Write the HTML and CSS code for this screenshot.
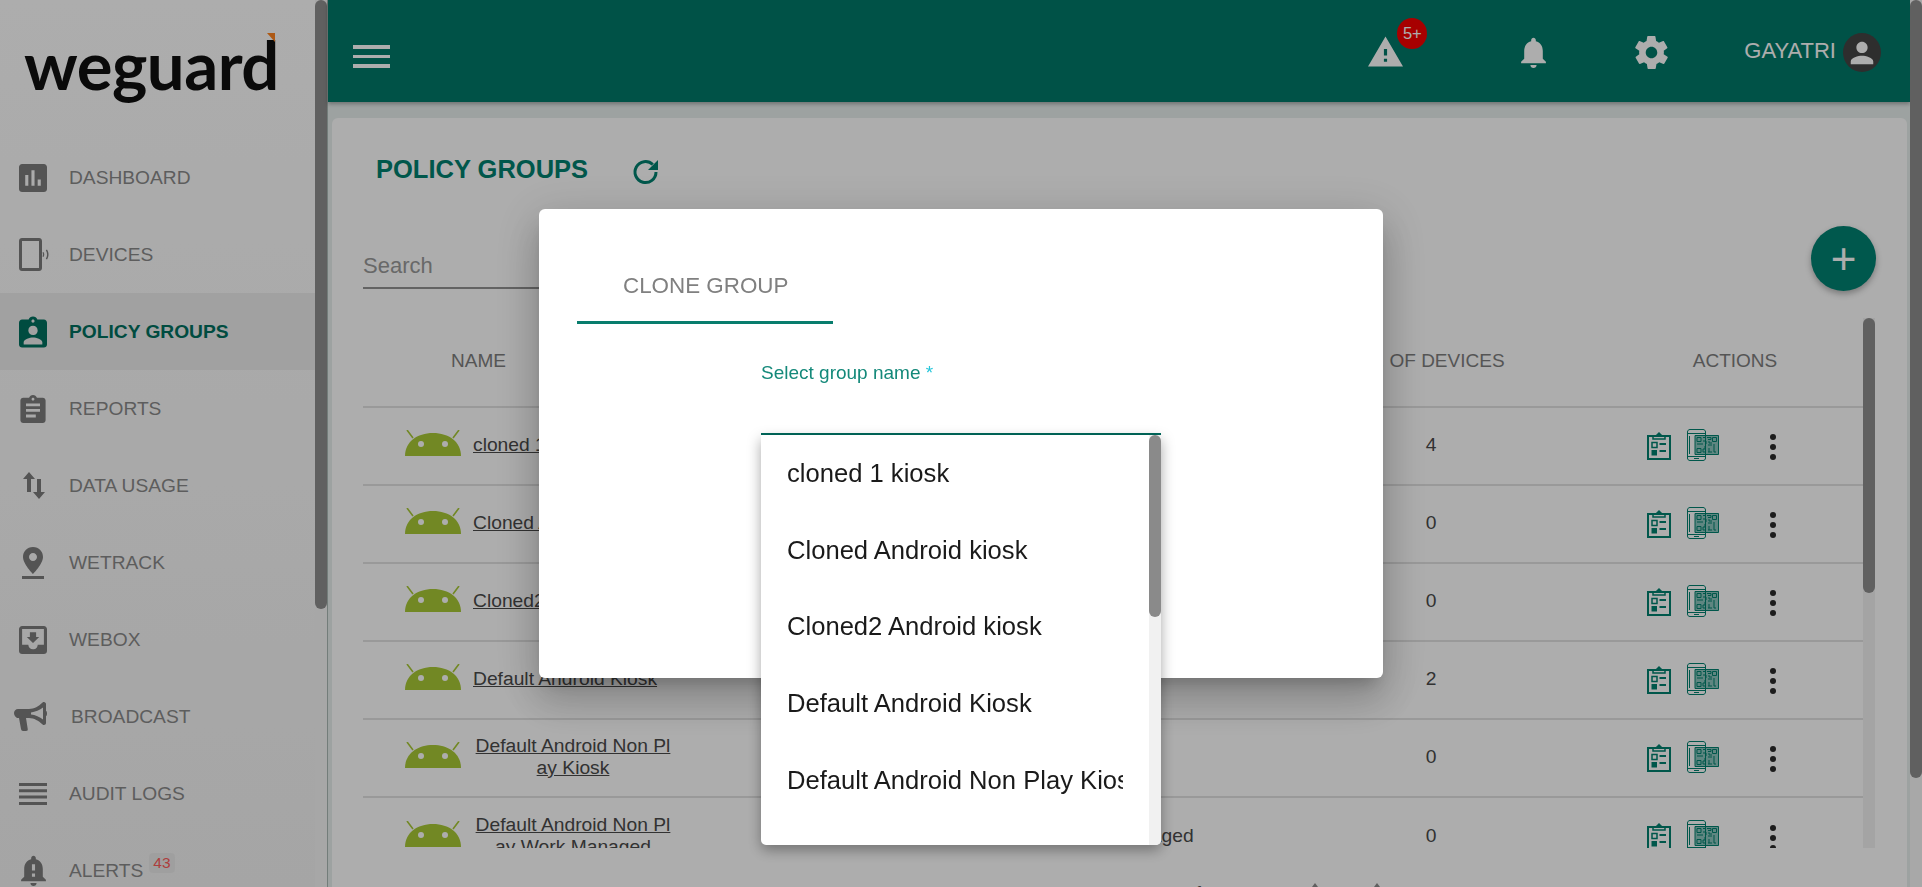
FILE: index.html
```html
<!DOCTYPE html>
<html lang="en">
<head>
    <meta charset="UTF-8">
    <meta name="viewport" content="width=device-width, initial-scale=1.0">
    <title>Policy Groups - WeGuard</title>
    <link rel="stylesheet" href="styles.css">
</head>
<body>
    <svg class="icon-defs" width="0" height="0" aria-hidden="true">
        <defs>
            <symbol id="android" viewBox="0 0 56 26">
                <path d="M0 26C0 12 12 3 28 3s28 9 28 23z" fill="currentColor"/>
                <path d="M8 8 2 0M48 8l6-8" stroke="currentColor" stroke-width="1.6" fill="none"/>
                <circle cx="16" cy="14" r="3" fill="#fff"/>
                <circle cx="40" cy="14" r="3" fill="#fff"/>
            </symbol>
            <symbol id="clipboard" viewBox="0 0 24 29">
                <path d="M1 5h22v23H1z" fill="none" stroke="currentColor" stroke-width="2"/>
                <path d="M6 8V5h3l3-3 3 3h3v3z" fill="none" stroke="currentColor" stroke-width="1.5"/>
                <path d="M5 11.500h5v5H5z" fill="none" stroke="currentColor" stroke-width="1.500"/>
                <path d="M4.500 19h5.500v5.500H4.500z" fill="currentColor"/>
                <path d="M12.500 13h6.500M12.500 20h6.500" stroke="currentColor" stroke-width="1.800"/>
            </symbol>
            <symbol id="qr-phone" viewBox="0 0 32 32">
                <path d="M3 .5h13c1.500 0 2.500 1 2.500 2.500v26c0 1.500-1 2.500-2.500 2.500H3C1.500 31.500.5 30.500.5 29V3C.5 1.500 1.500.5 3 .5z" fill="none" stroke="currentColor"/>
                <path d="M.5 4.500h18M.5 27.500h18M7 29.500h5M2.500 7v18" stroke="currentColor" fill="none"/>
                <path d="M8 6.500h23.500v19H8z" fill="currentColor" fill-opacity=".45" stroke="currentColor"/>
                <path d="M10 8.500h4v4h-4zM25.500 8.500h4v4h-4zM10 19.500h4v4h-4zM16 8.500h2M20 8.500h4v2h-3M16 12h3v3M10 15h6M22 12v2h3M18 17v3h-2v3h3M21 16h4M22 19v4h3M27 15v8h2M21 23h1" fill="none" stroke="currentColor"/>
            </symbol>
            <symbol id="kebab" viewBox="0 0 6 26">
                <circle cx="3" cy="3" r="3" fill="currentColor"/>
                <circle cx="3" cy="13" r="3" fill="currentColor"/>
                <circle cx="3" cy="23" r="3" fill="currentColor"/>
            </symbol>
        </defs>
    </svg>

    <div class="app">
        <aside class="sidebar">
            <div class="sidebar-content">
                <div class="logo">
                    <span class="logo-text">weguard</span>
                    <span class="logo-mark"></span>
                </div>
                <nav class="nav">
                    <a class="nav-item">
                        <svg class="nav-icon" viewBox="3 3 18 18"><path d="M19 3H5c-1.100 0-2 .9-2 2v14c0 1.100.9 2 2 2h14c1.100 0 2-.9 2-2V5c0-1.100-.9-2-2-2zM9 17H7v-7h2v7zm4 0h-2V7h2v10zm4 0h-2v-4h2v4z"/></svg>
                        <span>DASHBOARD</span>
                    </a>
                    <a class="nav-item">
                        <svg class="nav-icon nav-icon-device" viewBox="0 0 32 35"><path d="M4 1h17c1.700 0 3 1.300 3 3v27c0 1.700-1.300 3-3 3H4c-1.700 0-3-1.300-3-3V4c0-1.700 1.300-3 3-3zm0 3v27h17V4z"/><path d="M25.500 15c1 1.500 1 3.500 0 5l-1-.6c.6-1.200.6-2.600 0-3.800zM29 12.500c2 3 2 7 0 10l-1.200-.7c1.700-2.600 1.700-6 0-8.600z"/></svg>
                        <span>DEVICES</span>
                    </a>
                    <a class="nav-item nav-item-active">
                        <svg class="nav-icon" viewBox="3 1 18 20"><path d="M19 3h-4.200C14.400 1.800 13.300 1 12 1s-2.400.8-2.800 2H5c-1.100 0-2 .9-2 2v14c0 1.100.9 2 2 2h14c1.100 0 2-.9 2-2V5c0-1.100-.9-2-2-2zm-7 0c.6 0 1 .4 1 1s-.4 1-1 1-1-.4-1-1 .4-1 1-1zm0 4c1.700 0 3 1.300 3 3s-1.300 3-3 3-3-1.300-3-3 1.300-3 3-3zm6 12H6v-1.400c0-2 4-3.100 6-3.100s6 1.100 6 3.100V19z"/></svg>
                        <span>POLICY GROUPS</span>
                    </a>
                    <a class="nav-item">
                        <svg class="nav-icon" viewBox="3 1 18 20"><path d="M19 3h-4.200C14.400 1.800 13.300 1 12 1s-2.400.8-2.800 2H5c-1.100 0-2 .9-2 2v14c0 1.100.9 2 2 2h14c1.100 0 2-.9 2-2V5c0-1.100-.9-2-2-2zm-7 0c.6 0 1 .4 1 1s-.4 1-1 1-1-.4-1-1 .4-1 1-1zm2 14H7v-2h7v2zm3-4H7v-2h10v2zm0-4H7V7h10v2z"/></svg>
                        <span>REPORTS</span>
                    </a>
                    <a class="nav-item">
                        <svg class="nav-icon nav-icon-arrows" viewBox="0 0 22 27"><path d="M6 0l6 7H8v13H4V7H0zM16 27l-6-7h4V7h4v13h4z"/></svg>
                        <span>DATA USAGE</span>
                    </a>
                    <a class="nav-item">
                        <svg class="nav-icon nav-icon-pin" viewBox="0 0 22 32"><path d="M11 0C5 0 1 4.500 1 10c0 7 10 17 10 17s10-10 10-17c0-5.500-4-10-10-10zm0 14c-2.200 0-4-1.800-4-4s1.800-4 4-4 4 1.800 4 4-1.800 4-4 4z"/><path d="M0 29h22v3H0z"/></svg>
                        <span>WETRACK</span>
                    </a>
                    <a class="nav-item">
                        <svg class="nav-icon" viewBox="3 3 18 18"><path d="M19 3H5c-1.100 0-2 .9-2 2v14c0 1.100.9 2 2 2h14c1.100 0 2-.9 2-2V5c0-1.100-.9-2-2-2zm0 12h-4c0 1.700-1.300 3-3 3s-3-1.300-3-3H5V5h14v10zm-3-5h-2V7h-4v3H8l4 4z"/></svg>
                        <span>WEBOX</span>
                    </a>
                    <a class="nav-item">
                        <svg class="nav-icon nav-icon-horn" viewBox="0 0 33 29"><path d="M30 0c-1 0-1.500.5-2 1-3 3-8 6-13 6H4C1.800 7 0 8.800 0 11s1.800 5 4 5h1l2 11c.2 1 1 2 2 2h3c1.500 0 2-1 1.700-2.300L12 16h3c5 0 10 3 13 6 .5.500 1 1 2 1s2-1 2-2V14c.7 0 1-.8 1-2.500S32.700 9 32 9V2c0-1-1-2-2-2zm-1 5.500v12C26 15 21 13 17 12.600V10.400C21 10 26 8 29 5.500z"/></svg>
                        <span>BROADCAST</span>
                    </a>
                    <a class="nav-item">
                        <svg class="nav-icon nav-icon-lines" viewBox="0 0 28 22"><path d="M0 0h28v3H0zM0 6.300h28v3H0zM0 12.600h28v3H0zM0 19h28v3H0z"/></svg>
                        <span>AUDIT LOGS</span>
                    </a>
                    <a class="nav-item">
                        <svg class="nav-icon nav-icon-bell" viewBox="4 2 16 20"><path d="M12 22c1.100 0 2-.9 2-2h-4c0 1.100.9 2 2 2zm6-6v-5c0-3.100-1.600-5.600-4.500-6.300V4c0-.8-.7-1.500-1.500-1.500s-1.500.7-1.500 1.500v.7C7.600 5.400 6 7.900 6 11v5l-2 2v1h16v-1l-2-2zm-5 0h-2v-2h2v2zm0-4h-2V8h2v4z"/></svg>
                        <span>ALERTS</span>
                        <span class="nav-count">43</span>
                    </a>
                </nav>
            </div>
            <div class="scroll-track"><div class="scroll-thumb sidebar-thumb"></div></div>
        </aside>

        <div class="main">
            <header class="topbar">
                <button class="menu-button" aria-label="Menu"><span></span><span></span><span></span></button>
                <div class="topbar-actions">
                    <div class="topbar-alert">
                        <svg class="top-icon-warn" viewBox="1 2 22 19"><path d="M1 21h22L12 2 1 21zm12-3h-2v-2h2v2zm0-4h-2v-4h2v4z"/></svg>
                        <span class="alert-badge">5+</span>
                    </div>
                    <svg class="top-icon-bell" viewBox="4 2 16 20"><path d="M12 22c1.100 0 2-.9 2-2h-4c0 1.100.9 2 2 2zm6-6v-5c0-3.100-1.600-5.600-4.500-6.300V4c0-.8-.7-1.500-1.500-1.500s-1.500.7-1.500 1.500v.7C7.600 5.400 6 7.900 6 11v5l-2 2v1h16v-1l-2-2z"/></svg>
                    <svg class="top-icon-gear" viewBox="2.500 2 19 20"><path d="M19.400 13c0-.3.100-.6.100-1s0-.7-.1-1l2.100-1.600c.2-.2.200-.4.100-.6l-2-3.500c-.1-.2-.4-.3-.6-.2l-2.500 1c-.5-.4-1.100-.7-1.700-1l-.4-2.600c0-.3-.2-.5-.5-.5h-4c-.3 0-.5.200-.5.500l-.4 2.600c-.6.300-1.200.6-1.700 1l-2.500-1c-.2-.1-.5 0-.6.200l-2 3.500c-.1.200-.1.500.1.600L4.600 11c0 .3-.1.700-.1 1s0 .7.100 1l-2.100 1.600c-.2.200-.2.400-.1.600l2 3.500c.1.200.4.300.6.200l2.500-1c.5.400 1.100.7 1.700 1l.4 2.600c0 .3.200.5.500.5h4c.3 0 .5-.2.500-.5l.4-2.600c.6-.3 1.200-.6 1.700-1l2.500 1c.2.100.5 0 .6-.2l2-3.500c.1-.2.100-.5-.1-.6L19.400 13zM12 15.500c-1.900 0-3.500-1.600-3.500-3.500s1.600-3.500 3.500-3.500 3.500 1.600 3.500 3.500-1.600 3.500-3.500 3.500z"/></svg>
                    <div class="user">
                        <span class="user-name">GAYATRI</span>
                        <span class="user-avatar">
                            <svg viewBox="0 0 24 24"><path d="M12 12c2.500 0 4.500-2 4.500-4.500S14.500 3 12 3 7.500 5 7.500 7.500 9.500 12 12 12zm0 2.200c-3 0-9 1.500-9 4.500V21h18v-2.300c0-3-6-4.500-9-4.500z"/></svg>
                        </span>
                    </div>
                </div>
            </header>

            <section class="card">
                <div class="title-row">
                    <h1>POLICY GROUPS</h1>
                    <svg class="refresh" viewBox="0 0 28 28"><path d="M24 14a10.500 10.500 0 1 1-3.200-7.500" fill="none" stroke="currentColor" stroke-width="3"/><path d="M26 2v10H16z" fill="currentColor"/></svg>
                </div>
                <div class="search-row">
                    <div class="search">Search</div>
                    <button class="fab" aria-label="Add">+</button>
                </div>

                <div class="table">
                    <div class="table-main">
                        <div class="table-row table-head">
                            <div class="col-name">NAME</div>
                            <div class="col-mode">MODE</div>
                            <div class="col-count">NO. OF DEVICES</div>
                            <div class="col-actions">ACTIONS</div>
                        </div>
                        <div class="table-body">
                            <div class="table-row">
                                <div class="col-name"><svg class="android"><use href="#android"/></svg><a class="group-link">cloned 1 kiosk</a></div>
                                <div class="col-mode">Kiosk</div>
                                <div class="col-count">4</div>
                                <div class="col-actions"><svg class="ic-clip"><use href="#clipboard"/></svg><svg class="ic-qr"><use href="#qr-phone"/></svg><svg class="ic-more"><use href="#kebab"/></svg></div>
                            </div>
                            <div class="table-row">
                                <div class="col-name"><svg class="android"><use href="#android"/></svg><a class="group-link">Cloned Android kiosk</a></div>
                                <div class="col-mode">Kiosk</div>
                                <div class="col-count">0</div>
                                <div class="col-actions"><svg class="ic-clip"><use href="#clipboard"/></svg><svg class="ic-qr"><use href="#qr-phone"/></svg><svg class="ic-more"><use href="#kebab"/></svg></div>
                            </div>
                            <div class="table-row">
                                <div class="col-name"><svg class="android"><use href="#android"/></svg><a class="group-link">Cloned2 Android kiosk</a></div>
                                <div class="col-mode">Kiosk</div>
                                <div class="col-count">0</div>
                                <div class="col-actions"><svg class="ic-clip"><use href="#clipboard"/></svg><svg class="ic-qr"><use href="#qr-phone"/></svg><svg class="ic-more"><use href="#kebab"/></svg></div>
                            </div>
                            <div class="table-row">
                                <div class="col-name"><svg class="android"><use href="#android"/></svg><a class="group-link">Default Android Kiosk</a></div>
                                <div class="col-mode">Kiosk</div>
                                <div class="col-count">2</div>
                                <div class="col-actions"><svg class="ic-clip"><use href="#clipboard"/></svg><svg class="ic-qr"><use href="#qr-phone"/></svg><svg class="ic-more"><use href="#kebab"/></svg></div>
                            </div>
                            <div class="table-row">
                                <div class="col-name"><svg class="android"><use href="#android"/></svg><a class="group-link">Default Android Non Play Kiosk</a></div>
                                <div class="col-mode">Kiosk</div>
                                <div class="col-count">0</div>
                                <div class="col-actions"><svg class="ic-clip"><use href="#clipboard"/></svg><svg class="ic-qr"><use href="#qr-phone"/></svg><svg class="ic-more"><use href="#kebab"/></svg></div>
                            </div>
                            <div class="table-row">
                                <div class="col-name"><svg class="android"><use href="#android"/></svg><a class="group-link">Default Android Non Play Work Managed</a></div>
                                <div class="col-mode">Work Managed</div>
                                <div class="col-count">0</div>
                                <div class="col-actions"><svg class="ic-clip"><use href="#clipboard"/></svg><svg class="ic-qr"><use href="#qr-phone"/></svg><svg class="ic-more"><use href="#kebab"/></svg></div>
                            </div>
                        </div>
                    </div>
                    <div class="scroll-track table-track"><div class="scroll-thumb table-thumb"></div></div>
                </div>

                <div class="pagination">
                    <span>Rows per page:</span>
                    <span class="page-size">100</span>
                    <span class="page-range">1 - 13 of 13</span>
                    <span class="page-arrow"></span>
                    <span class="page-arrow"></span>
                </div>
            </section>
        </div>

        <div class="scroll-track page-track"><div class="scroll-thumb page-thumb"></div></div>
    </div>

    <div class="backdrop"></div>

    <div class="modal">
        <div class="tabs">
            <div class="tab">CLONE GROUP</div>
        </div>
        <div class="field">
            <label class="field-label">Select group name <span class="required">*</span></label>
            <div class="field-input"></div>
        </div>
        <div class="menu">
            <ul class="menu-list">
                <li>cloned 1 kiosk</li>
                <li>Cloned Android kiosk</li>
                <li>Cloned2 Android kiosk</li>
                <li>Default Android Kiosk</li>
                <li>Default Android Non Play Kiosk</li>
            </ul>
            <div class="scroll-track menu-track"><div class="scroll-thumb menu-thumb"></div></div>
        </div>
    </div>
</body>
</html>
```

FILE: styles.css
```css
/* page */
html,
body {
    height: 887px;
    overflow: hidden;
}
body {
    margin: 0;
    font-family: "Liberation Sans", Arial, sans-serif;
    color: #333;
    background: #fff;
}
.icon-defs {
    position: absolute;
}
.app {
    display: flex;
    height: 887px;
    overflow: hidden;
}

/* drawn scrollbars */
.scroll-track {
    flex: 0 0 12px;
    width: 12px;
    background: #f6f6f6;
}
.scroll-thumb {
    background: #8e8e8e;
    border-radius: 6px;
}
.sidebar-thumb { height: 609px; }
.table-track { height: 530px; background: #f2f2f2; }
.table-thumb { height: 275px; }
.page-thumb { height: 778px; }
.page-track { background: #f8f8f8; }
.menu-track { background: #f1f1f1; }
.menu-thumb { height: 182px; background: #8a8a8a; }

/* sidebar */
.sidebar {
    flex: 0 0 328px;
    display: flex;
    background: linear-gradient(#fff, #f4f4f4);
    border-right: 1px solid #aab8b4;
    box-sizing: border-box;
}
.sidebar-content {
    flex: 1;
    min-width: 0;
}
.logo {
    height: 139px;
    padding-left: 24px;
    position: relative;
    box-sizing: border-box;
}
.logo-text {
    display: block;
    font-family: Lato, sans-serif;
    font-weight: 700;
    font-size: 67px;
    line-height: 72px;
    letter-spacing: -.5px;
    color: #0f0f0f;
    padding-top: 28px;
}
.logo-mark {
    position: absolute;
    left: 267px;
    top: 33px;
    width: 0;
    height: 0;
    border-top: 9px solid #ff8420;
    border-left: 8px solid transparent;
}
.nav-item {
    display: flex;
    align-items: center;
    height: 77px;
    padding-left: 19px;
    font-size: 19.200px;
    color: #8a8a8a;
    box-sizing: border-box;
}
.nav-item-active {
    background: #ededed;
    color: #00705f;
    font-weight: 700;
}
.nav-icon {
    width: 28px;
    height: 28px;
    margin-right: 22px;
    fill: #7c7c7c;
    flex: none;
}
.nav-item-active .nav-icon {
    fill: #00705f;
    height: 32px;
}
.nav-icon-device { width: 32px; height: 35px; margin: 0 19px 0 -1px; }
.nav-icon-arrows { width: 22px; height: 27px; margin: 0 24px 0 4px; }
.nav-icon-pin { width: 22px; height: 32px; margin: 0 25px 0 3px; }
.nav-icon-horn { width: 33px; height: 29px; margin: 0 24px 0 -5px; }
.nav-icon-lines { width: 28px; height: 22px; }
.nav-icon-bell { width: 25px; height: 31px; margin: 0 23px 0 2px; }
.nav-count {
    align-self: flex-start;
    margin: 21px 0 0 6px;
    padding: 1px 4px;
    font-size: 15.500px;
    color: #ff5c5c;
    background: #ebebeb;
    border-radius: 4px;
}

/* top bar */
.main {
    flex: 1;
    min-width: 0;
    background: #e8efee;
    display: flex;
    flex-direction: column;
}
.topbar {
    height: 102px;
    flex: none;
    background: #007a69;
    display: flex;
    align-items: flex-start;
    justify-content: space-between;
    box-shadow: 0 2px 4px rgba(0, 0, 0, .3);
}
.menu-button {
    margin: 45px 0 0 25px;
    padding: 0;
    width: 37px;
    background: none;
    border: none;
    display: flex;
    flex-direction: column;
    gap: 6px;
}
.menu-button span {
    display: block;
    height: 3.500px;
    background: #fff;
}
.topbar-actions {
    display: flex;
    align-items: flex-start;
    fill: #fff;
    padding-right: 29px;
}
.topbar-alert {
    position: relative;
    width: 60px;
    padding-top: 36px;
}
.top-icon-warn {
    display: block;
    width: 35px;
    height: 31px;
}
.alert-badge {
    position: absolute;
    left: 29px;
    top: 18px;
    width: 30px;
    height: 31px;
    border-radius: 50%;
    background: #f70000;
    color: #fff;
    font-size: 16.500px;
    line-height: 31px;
    text-align: center;
}
.top-icon-bell {
    width: 27px;
    height: 31px;
    margin: 37px 88px 0 92px;
}
.top-icon-gear {
    width: 33px;
    height: 33px;
    margin: 36px 76px 0 0;
}
.user {
    display: flex;
    align-items: flex-start;
}
.user-name {
    font-size: 22px;
    color: #fff;
    margin: 38px 7px 0 0;
}
.user-avatar {
    width: 38px;
    height: 39px;
    margin-top: 33px;
    border-radius: 50%;
    background: #444;
    display: flex;
    align-items: center;
    justify-content: center;
}
.user-avatar svg {
    width: 30px;
    height: 30px;
    fill: #fff;
}

/* card */
.card {
    flex: 1;
    margin: 16px 3px 0 4px;
    background: #fff;
    border-radius: 6px 6px 0 0;
    overflow: hidden;
}
.title-row {
    display: flex;
    align-items: center;
    height: 44px;
    margin: 29px 0 0 44px;
}
h1 {
    margin: 0;
    font-size: 25.500px;
    color: #00806f;
    font-weight: 700;
}
.refresh {
    width: 28px;
    height: 28px;
    margin: 5px 0 0 44px;
    color: #00806f;
}
.search-row {
    display: flex;
    justify-content: space-between;
    margin: 59px 0 0 31px;
    height: 68px;
}
.search {
    width: 400px;
    height: 37px;
    border-bottom: 2px solid #929292;
    font-size: 22px;
    line-height: 32px;
    color: #9a9a9a;
}
.fab {
    width: 65px;
    height: 65px;
    margin: -24px 31px 0 0;
    border: none;
    border-radius: 50%;
    background: #008272;
    color: #fff;
    font-size: 44px;
    line-height: 60px;
    padding: 0;
    box-shadow: 0 3px 6px rgba(0, 0, 0, .3);
}

/* table */
.table {
    display: flex;
    margin-left: 31px;
    height: 530px;
}
.table-main {
    flex: 0 0 1500px;
    min-width: 0;
}
.table-row {
    display: flex;
    height: 78px;
    padding-bottom: 2px;
    align-items: center;
    border-bottom: 2px solid #e2e2e2;
    box-sizing: border-box;
    font-size: 19.250px;
}
.table-head {
    height: 90px;
    font-size: 19px;
    padding-bottom: 3px;
}
.table-body {
    height: 440px;
    overflow: hidden;
}
.table-body .table-row:last-child {
    border-bottom: none;
}
.col-name {
    flex: 0 0 340px;
    display: flex;
    align-items: center;
    color: #4a4a4a;
    padding-left: 42px;
    box-sizing: border-box;
}
.android {
    width: 56px;
    height: 26px;
    flex: none;
    color: #a8c936;
    margin: 0 12px 4px 0;
}
.group-link {
    flex: 0 0 auto;
    max-width: 200px;
    word-break: break-all;
    text-align: center;
    text-decoration: underline;
    line-height: 22.500px;
}
.col-mode {
    flex: 0 0 157px;
    margin-left: 347px;
    text-align: center;
    white-space: nowrap;
    color: #4a4a4a;
}
.col-count {
    flex: 0 0 164px;
    margin-left: 142px;
    box-sizing: border-box;
    text-align: center;
    white-space: nowrap;
    color: #4a4a4a;
}
.col-actions {
    display: flex;
    align-items: center;
    margin-left: 134px;
    color: #00806f;
}
.table-head .col-name {
    padding-left: 88px;
    color: #7e7e7e;
}
.table-head .col-mode {
    color: #7e7e7e;
}
.table-head .col-count {
    padding-right: 7px;
    color: #7e7e7e;
}
.table-head .col-actions {
    flex: 0 0 240px;
    justify-content: center;
    margin-left: 102px;
    color: #7e7e7e;
}
.ic-clip {
    width: 24px;
    height: 29px;
    margin-right: 16px;
}
.ic-qr {
    width: 32px;
    height: 32px;
    margin-right: 51px;
}
.ic-more {
    width: 6px;
    height: 26px;
    margin-top: 3px;
    color: #2a2a2a;
}

/* pagination, cut by the bottom of the window */
.pagination {
    display: flex;
    margin: 35px 0 0 498px;
    font-size: 19.600px;
    color: #555;
    white-space: nowrap;
}
.page-size { margin-left: 18px; }
.page-range { margin-left: 111px; }
.page-arrow {
    width: 0;
    height: 0;
    margin: 0 0 0 81px;
    border-left: 6px solid transparent;
    border-right: 6px solid transparent;
    border-bottom: 8px solid #8c8c8c;
}
.page-arrow + .page-arrow { margin-left: 50px; }

/* dialog */
.backdrop {
    position: fixed;
    left: 0;
    right: 0;
    top: 0;
    bottom: 0;
    background: rgba(0, 0, 0, .32);
}
.modal {
    position: fixed;
    left: 539px;
    top: 209px;
    width: 844px;
    height: 469px;
    padding-left: 38px;
    box-sizing: border-box;
    background: #fff;
    border-radius: 6px;
    box-shadow: 0 11px 15px -7px rgba(0, 0, 0, .2), 0 24px 38px 3px rgba(0, 0, 0, .14), 0 9px 46px 8px rgba(0, 0, 0, .12);
}
.tabs {
    display: flex;
    padding-top: 41px;
}
.tab {
    width: 256px;
    height: 74px;
    box-sizing: border-box;
    border-bottom: 3px solid #087d6d;
    padding-left: 46px;
    font-size: 22.400px;
    line-height: 72px;
    color: #808080;
}
.field {
    width: 400px;
    margin: 38px 0 0 184px;
}
.field-label {
    display: block;
    font-size: 19px;
    line-height: 22px;
    color: #14897a;
}
.required {
    color: #26c6da;
}
.field-input {
    height: 49px;
    border-bottom: 2px solid #00695c;
}
.menu {
    position: absolute;
    left: 222px;
    top: 226px;
    width: 400px;
    height: 410px;
    display: flex;
    overflow: hidden;
    background: #fff;
    border-radius: 0 0 5px 5px;
    box-shadow: 0 5px 14px rgba(0, 0, 0, .35);
}
.menu-list {
    flex: 1;
    min-width: 0;
    margin: 0;
    padding: 0;
    list-style: none;
}
.menu-list li {
    height: 76.700px;
    margin: 0 26px;
    overflow: hidden;
    white-space: nowrap;
    font-size: 25.600px;
    line-height: 76.700px;
    color: #1a1a1a;
}
```
